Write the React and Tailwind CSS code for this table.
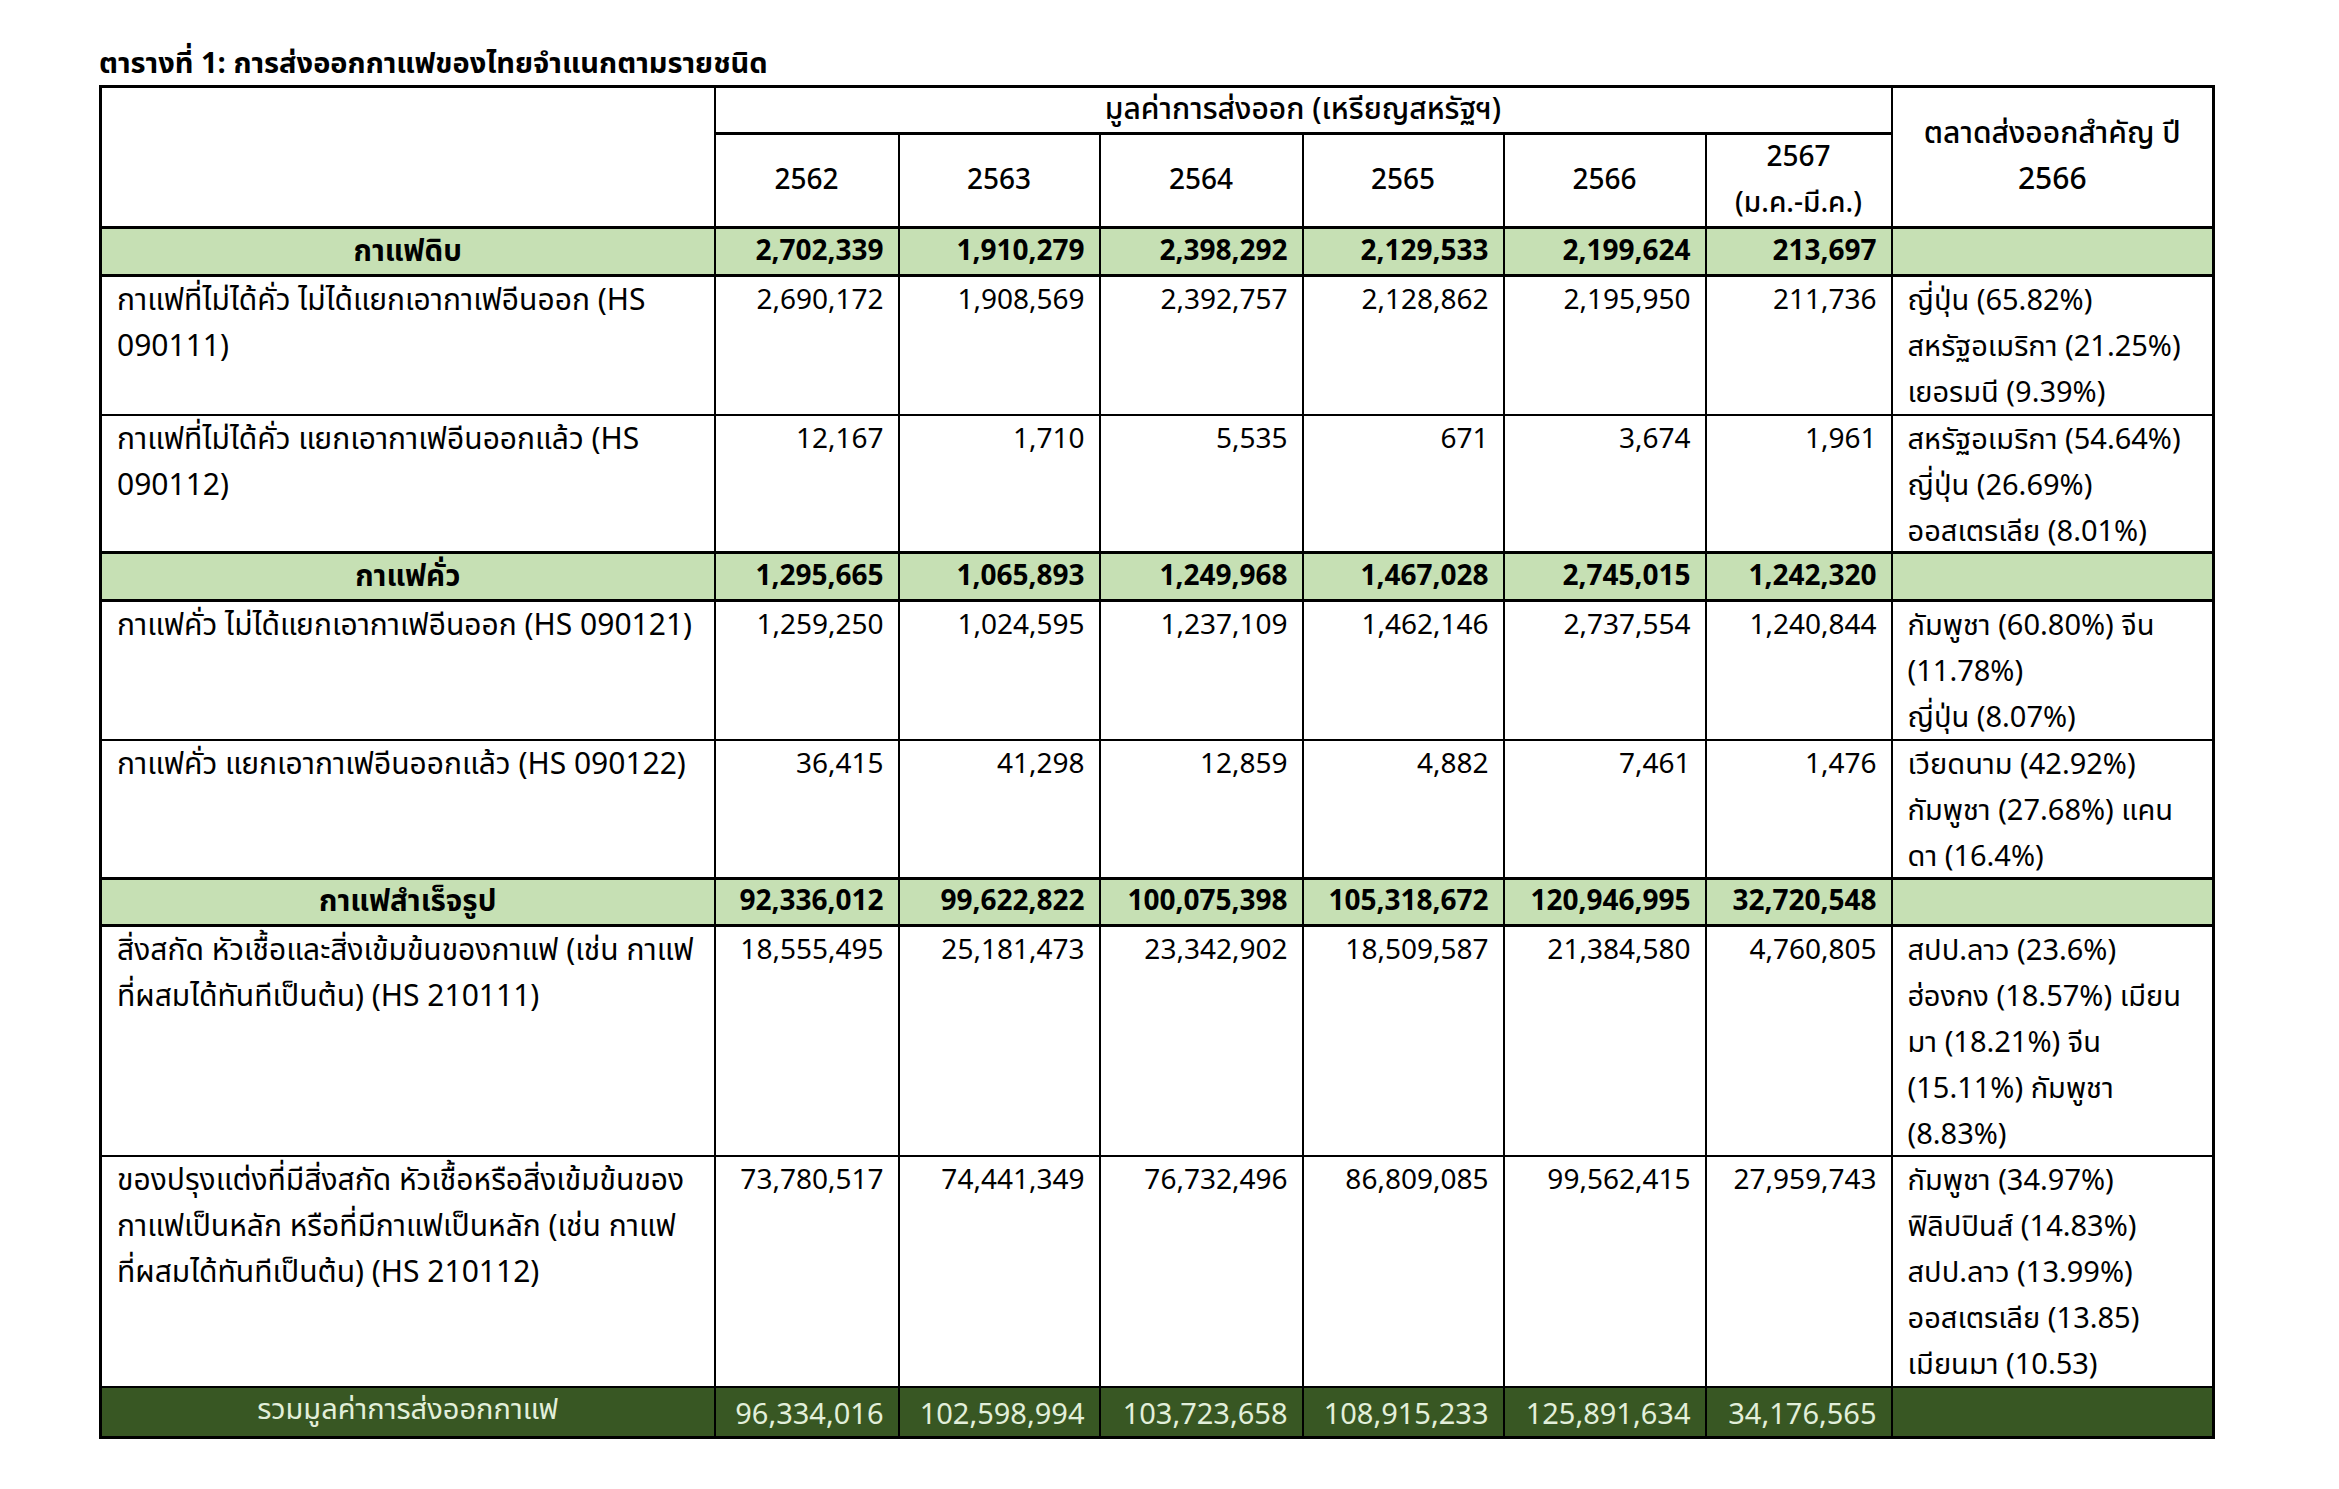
const FONT = '"Noto Sans Thai", "Noto Sans Thai UI", "Noto Sans", sans-serif';

const years = ['2562', '2563', '2564', '2565', '2566'];

const rows = [
  {
    type: 'group',
    label: 'กาแฟดิบ',
    values: ['2,702,339', '1,910,279', '2,398,292', '2,129,533', '2,199,624', '213,697'],
    h: 'h-[48px]',
  },
  {
    type: 'item',
    label: ['กาแฟที่ไม่ได้คั่ว ไม่ได้แยกเอากาเฟอีนออก (HS', '090111)'],
    values: ['2,690,172', '1,908,569', '2,392,757', '2,128,862', '2,195,950', '211,736'],
    markets: ['ญี่ปุ่น (65.82%)', 'สหรัฐอเมริกา (21.25%)', 'เยอรมนี (9.39%)'],
    h: 'h-[139px]',
  },
  {
    type: 'item',
    label: ['กาแฟที่ไม่ได้คั่ว แยกเอากาเฟอีนออกแล้ว (HS', '090112)'],
    values: ['12,167', '1,710', '5,535', '671', '3,674', '1,961'],
    markets: ['สหรัฐอเมริกา (54.64%)', 'ญี่ปุ่น (26.69%)', 'ออสเตรเลีย (8.01%)'],
    h: 'h-[138px]',
  },
  {
    type: 'group',
    label: 'กาแฟคั่ว',
    values: ['1,295,665', '1,065,893', '1,249,968', '1,467,028', '2,745,015', '1,242,320'],
    h: 'h-[48px]',
  },
  {
    type: 'item',
    label: ['กาแฟคั่ว ไม่ได้แยกเอากาเฟอีนออก (HS 090121)'],
    values: ['1,259,250', '1,024,595', '1,237,109', '1,462,146', '2,737,554', '1,240,844'],
    markets: ['กัมพูชา (60.80%) จีน', '(11.78%)', 'ญี่ปุ่น (8.07%)'],
    h: 'h-[139px]',
  },
  {
    type: 'item',
    label: ['กาแฟคั่ว แยกเอากาเฟอีนออกแล้ว (HS 090122)'],
    values: ['36,415', '41,298', '12,859', '4,882', '7,461', '1,476'],
    markets: ['เวียดนาม (42.92%)', 'กัมพูชา (27.68%) แคน', 'ดา (16.4%)'],
    h: 'h-[139px]',
  },
  {
    type: 'group',
    label: 'กาแฟสำเร็จรูป',
    values: ['92,336,012', '99,622,822', '100,075,398', '105,318,672', '120,946,995', '32,720,548'],
    h: 'h-[47px]',
  },
  {
    type: 'item',
    label: ['สิ่งสกัด หัวเชื้อและสิ่งเข้มข้นของกาแฟ (เช่น กาแฟ', 'ที่ผสมได้ทันทีเป็นต้น) (HS 210111)'],
    values: ['18,555,495', '25,181,473', '23,342,902', '18,509,587', '21,384,580', '4,760,805'],
    markets: ['สปป.ลาว (23.6%)', 'ฮ่องกง (18.57%) เมียน', 'มา (18.21%) จีน', '(15.11%) กัมพูชา', '(8.83%)'],
    h: 'h-[230px]',
  },
  {
    type: 'item',
    label: [
      'ของปรุงแต่งที่มีสิ่งสกัด หัวเชื้อหรือสิ่งเข้มข้นของ',
      'กาแฟเป็นหลัก หรือที่มีกาแฟเป็นหลัก (เช่น กาแฟ',
      'ที่ผสมได้ทันทีเป็นต้น) (HS 210112)',
    ],
    values: ['73,780,517', '74,441,349', '76,732,496', '86,809,085', '99,562,415', '27,959,743'],
    markets: ['กัมพูชา (34.97%)', 'ฟิลิปปินส์ (14.83%)', 'สปป.ลาว (13.99%)', 'ออสเตรเลีย (13.85)', 'เมียนมา (10.53)'],
    h: 'h-[231px]',
  },
];

const total = ['96,334,016', '102,598,994', '103,723,658', '108,915,233', '125,891,634', '34,176,565'];

// lines hang from the top of the cell and may run a few px into the border, as in the source sheet
function Lines({ lines, className = '' }) {
  return (
    <div className={`h-0 overflow-visible ${className}`}>
      {lines.map((l, i) => (
        <div key={i} className="whitespace-nowrap leading-[46px]">{l}</div>
      ))}
    </div>
  );
}

export default function App() {
  return (
    <div className="min-h-screen bg-white text-black pt-[44px] pl-[99px]" style={{ fontFamily: FONT }}>
      <div className="h-[41px] text-[29px] font-bold leading-[40px]">ตารางที่ 1: การส่งออกกาแฟของไทยจำแนกตามรายชนิด</div>

      <table className="table-fixed border-collapse border-[3px] border-black text-[28px] leading-[38px]" style={{ width: 2113 }}>
        <colgroup>
          <col className="w-[614px]" />
          <col className="w-[184px]" />
          <col className="w-[201px]" />
          <col className="w-[203px]" />
          <col className="w-[201px]" />
          <col className="w-[202px]" />
          <col className="w-[186px]" />
          <col className="w-[322px]" />
        </colgroup>
        <thead>
          <tr className="h-[47px]">
            <td rowSpan={2} className="border-2 border-black"></td>
            <td colSpan={6} className="border-2 border-b-[3px] border-black text-center text-[30px] font-medium">
              มูลค่าการส่งออก (เหรียญสหรัฐฯ)
            </td>
            <td rowSpan={2} className="border-2 border-black text-center text-[30px] font-medium">
              <div className="leading-[46px]">ตลาดส่งออกสำคัญ ปี</div>
              <div className="leading-[46px]">2566</div>
            </td>
          </tr>
          <tr className="h-[94px]">
            {years.map((y) => (
              <td key={y} className="border-2 border-black text-center font-medium">{y}</td>
            ))}
            <td className="border-2 border-black text-center font-medium">
              <div className="h-[84px] flex flex-col justify-center">
                <div className="leading-[46px]">2567</div>
                <div className="leading-[46px]">(ม.ค.-มี.ค.)</div>
              </div>
            </td>
          </tr>
        </thead>
        <tbody>
          {rows.map((r, idx) =>
            r.type === 'group' ? (
              <tr key={idx} className={`${r.h} bg-[#c6e0b4]`}>
                <td className="border-2 border-y-[3px] border-black text-center text-[29.5px] font-bold">{r.label}</td>
                {r.values.map((v, i) => (
                  <td key={i} className="border-2 border-y-[3px] border-black text-right pr-[14px] font-bold">{v}</td>
                ))}
                <td className="border-2 border-y-[3px] border-black"></td>
              </tr>
            ) : (
              <tr key={idx} className={r.h}>
                <td className="border-2 border-black align-top pl-[15px] pt-[1px] text-[30px]">
                  <Lines lines={r.label} />
                </td>
                {r.values.map((v, i) => (
                  <td key={i} className="border-2 border-black align-top text-right pr-[14px] pt-[1px]">
                    <Lines lines={[v]} />
                  </td>
                ))}
                <td className="border-2 border-black align-top pl-[15px] pt-[1px] text-[29px]">
                  <Lines lines={r.markets} />
                </td>
              </tr>
            )
          )}
          <tr className="h-[51px] bg-[#385723] text-[#e2efda] text-[29px]">
            <td className="border-2 border-black text-center pb-[4px]">รวมมูลค่าการส่งออกกาแฟ</td>
            {total.map((v, i) => (
              <td key={i} className="border-2 border-black text-right pr-[14px] pt-[6px]">{v}</td>
            ))}
            <td className="border-2 border-black"></td>
          </tr>
        </tbody>
      </table>
    </div>
  );
}
